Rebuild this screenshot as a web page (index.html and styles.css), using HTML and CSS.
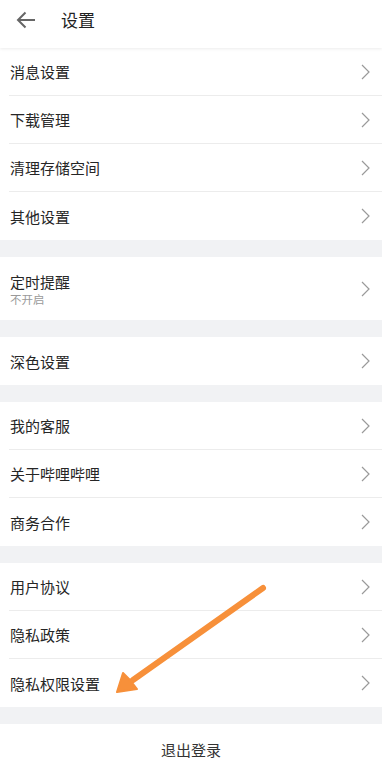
FILE: index.html
```html
<!DOCTYPE html>
<html lang="zh">
<head>
<meta charset="utf-8">
<title>设置</title>
<link rel="stylesheet" href="styles.css">
</head>
<body>
<div class="page">
  <header class="topbar">
    <svg class="back" width="20" height="18" viewBox="0 0 20 18"><path d="M19 9H2M9.5 1.5L2 9l7.5 7.5" fill="none" stroke="#666" stroke-width="2"/></svg>
    <span class="title">设置</span>
  </header>

  <section class="group">
    <div class="row"><span class="label">消息设置</span><svg class="chev" viewBox="0 0 9 16"><path d="M1 1l7 7-7 7" fill="none" stroke="#9a9a9a" stroke-width="1.2"/></svg></div>
    <div class="row"><span class="label">下载管理</span><svg class="chev" viewBox="0 0 9 16"><path d="M1 1l7 7-7 7" fill="none" stroke="#9a9a9a" stroke-width="1.2"/></svg></div>
    <div class="row"><span class="label">清理存储空间</span><svg class="chev" viewBox="0 0 9 16"><path d="M1 1l7 7-7 7" fill="none" stroke="#9a9a9a" stroke-width="1.2"/></svg></div>
    <div class="row"><span class="label">其他设置</span><svg class="chev" viewBox="0 0 9 16"><path d="M1 1l7 7-7 7" fill="none" stroke="#9a9a9a" stroke-width="1.2"/></svg></div>
  </section>

  <section class="group">
    <div class="row tall"><div class="texts"><span class="label">定时提醒</span><span class="sub">不开启</span></div><svg class="chev" viewBox="0 0 9 16"><path d="M1 1l7 7-7 7" fill="none" stroke="#9a9a9a" stroke-width="1.2"/></svg></div>
  </section>

  <section class="group">
    <div class="row"><span class="label">深色设置</span><svg class="chev" viewBox="0 0 9 16"><path d="M1 1l7 7-7 7" fill="none" stroke="#9a9a9a" stroke-width="1.2"/></svg></div>
  </section>

  <section class="group">
    <div class="row"><span class="label">我的客服</span><svg class="chev" viewBox="0 0 9 16"><path d="M1 1l7 7-7 7" fill="none" stroke="#9a9a9a" stroke-width="1.2"/></svg></div>
    <div class="row"><span class="label">关于哔哩哔哩</span><svg class="chev" viewBox="0 0 9 16"><path d="M1 1l7 7-7 7" fill="none" stroke="#9a9a9a" stroke-width="1.2"/></svg></div>
    <div class="row"><span class="label">商务合作</span><svg class="chev" viewBox="0 0 9 16"><path d="M1 1l7 7-7 7" fill="none" stroke="#9a9a9a" stroke-width="1.2"/></svg></div>
  </section>

  <section class="group">
    <div class="row"><span class="label">用户协议</span><svg class="chev" viewBox="0 0 9 16"><path d="M1 1l7 7-7 7" fill="none" stroke="#9a9a9a" stroke-width="1.2"/></svg></div>
    <div class="row"><span class="label">隐私政策</span><svg class="chev" viewBox="0 0 9 16"><path d="M1 1l7 7-7 7" fill="none" stroke="#9a9a9a" stroke-width="1.2"/></svg></div>
    <div class="row"><span class="label">隐私权限设置</span><svg class="chev" viewBox="0 0 9 16"><path d="M1 1l7 7-7 7" fill="none" stroke="#9a9a9a" stroke-width="1.2"/></svg></div>
  </section>

  <section class="group logout">退出登录</section>

  <svg class="annotation" width="382" height="767" viewBox="0 0 382 767">
    <line x1="263" y1="588" x2="133" y2="680" stroke="#f7903a" stroke-width="6" stroke-linecap="round"/>
    <path d="M117 692 L123 673 L130 680 L137 689 Z" fill="#f7903a" stroke="#f7903a" stroke-width="2" stroke-linejoin="round"/>
  </svg>
</div>
</body>
</html>
```

FILE: styles.css
```css
* { box-sizing: border-box; }
html, body { margin: 0; padding: 0; }
body {
  background: #f1f2f4;
  font-family: "Noto Sans CJK SC", "Noto Sans", sans-serif;
  color: #222;
}
.page {
  position: relative;
  width: 382px;
  height: 767px;
  overflow: hidden;
  display: flex;
  flex-direction: column;
  gap: 17px;
}
.page > * { flex-shrink: 0; }
.topbar {
  height: 48px;
  background: #fff;
  display: flex;
  align-items: center;
  padding-left: 16px;
  padding-bottom: 9px;
  gap: 25px;
  box-shadow: 0 1px 3px rgba(0,0,0,0.08);
  position: relative;
  z-index: 1;
  margin-bottom: -17px;
}
.back { display: block; }
.title { font-size: 17px; color: #222; line-height: 1; }
.group {
  background: #fff;
}
.row {
  height: 48px;
  margin-left: 9px;
  padding-left: 1px;
  padding-right: 12px;
  display: flex;
  align-items: center;
  justify-content: space-between;
  border-bottom: 1px solid #ececec;
}
.row:last-child { border-bottom: none; }
.row.tall { height: 63px; }
.label { font-size: 15px; line-height: 1; color: #262626; }
.texts { display: flex; flex-direction: column; gap: 5px; padding-top: 2px; }
.sub { font-size: 11.5px; color: #9a9a9a; line-height: 1; }
.chev { width: 9px; height: 16px; display: block; }
.logout {
  height: 60px;
  display: flex;
  justify-content: center;
  padding-top: 18px;
  font-size: 15px;
  color: #333;
  line-height: 1;
}
.annotation {
  position: absolute;
  left: 0;
  top: 0;
  pointer-events: none;
}
```
